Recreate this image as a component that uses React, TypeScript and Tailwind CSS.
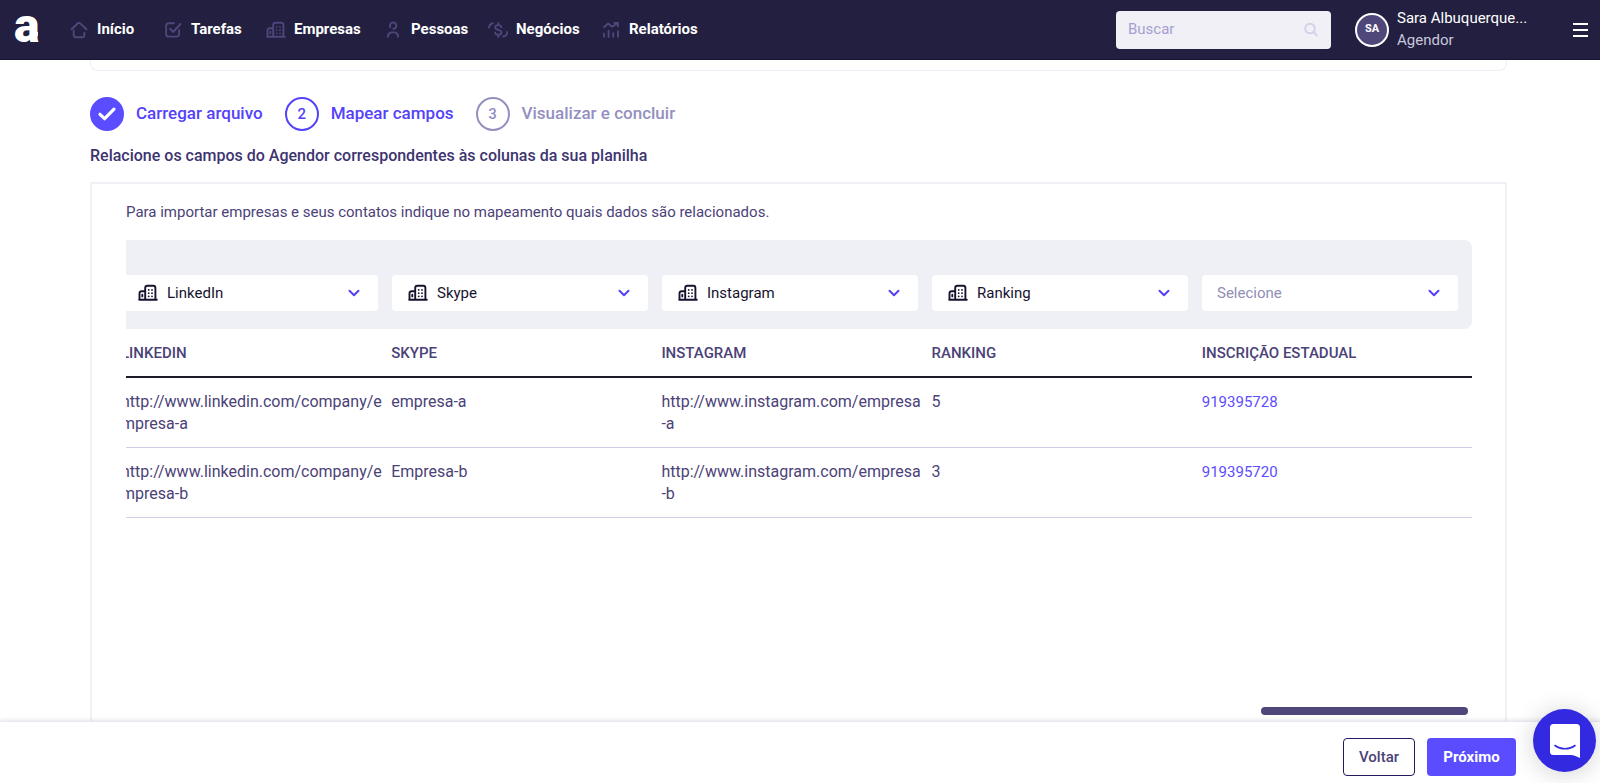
import type { ReactNode } from 'react';

const navItems = [
  { label: 'Início', icon: <HomeIcon />, width: 'w-[94px]' },
  { label: 'Tarefas', icon: <TaskIcon />, width: 'w-[103px]' },
  { label: 'Empresas', icon: <CompanyIcon />, width: 'w-[117px]' },
  { label: 'Pessoas', icon: <PersonIcon />, width: 'w-[105px]' },
  { label: 'Negócios', icon: <DealIcon />, width: 'w-[113px]' },
  { label: 'Relatórios', icon: <ReportIcon />, width: 'w-[113px]' },
];

const columns = [
  { title: 'LinkedIn', mapped: true },
  { title: 'Skype', mapped: true },
  { title: 'Instagram', mapped: true },
  { title: 'Ranking', mapped: true },
  { title: 'Inscrição Estadual', mapped: false },
];

const rows = [
  ['http://www.linkedin.com/company/empresa-a', 'empresa-a', 'http://www.instagram.com/empresa-a', '5', '919395728'],
  ['http://www.linkedin.com/company/empresa-b', 'Empresa-b', 'http://www.instagram.com/empresa-b', '3', '919395720'],
];

function Icon({ children }: { children: ReactNode }) {
  return (
    <svg
      viewBox="0 0 20 20"
      className="h-5 w-5 shrink-0"
      fill="none"
      stroke="currentColor"
      strokeWidth="1.9"
      strokeLinecap="round"
      strokeLinejoin="round"
      aria-hidden="true"
    >
      {children}
    </svg>
  );
}

function HomeIcon() {
  return (
    <Icon>
      <path d="m2.6 9.3 6.2-6a1.700 1.700 0 0 1 2.400 0l6.200 6M4.700 10.500v4.800a1.900 1.900 0 0 0 1.900 1.900h6.800a1.900 1.900 0 0 0 1.900-1.900v-2.500" />
    </Icon>
  );
}

function TaskIcon() {
  return (
    <Icon>
      <path d="M11 3.200H5.800A2.700 2.700 0 0 0 3.100 5.900v8a2.700 2.700 0 0 0 2.700 2.700h7.600a2.700 2.700 0 0 0 2.700-2.700V10M7 8.700l3.100 3.300 7.400-8" />
    </Icon>
  );
}

function CompanyIcon() {
  return (
    <Icon>
      <path d="M1.200 16.800h17.600M7.200 16.600V5A2.200 2.200 0 0 1 9.400 2.800h5.800A2.200 2.200 0 0 1 17.400 5v11.600M7 8.300H3.800A2.300 2.300 0 0 0 1.500 10.600v6M4.300 11.800v1.600" />
      <path strokeWidth="1.800" d="M10.700 6.900h.01M14 6.900h.01M10.700 10.200h.01M14 10.200h.01M10.700 13.300h.01M14 13.300h.01" />
    </Icon>
  );
}

function PersonIcon() {
  return (
    <Icon>
      <path d="M7.300 7.200A3.200 3.200 0 1 1 10.300 8.900M5 16.800v-.5a3.900 3.900 0 0 1 3.900-3.900h2.200a3.900 3.900 0 0 1 3.900 3.900v.5" />
    </Icon>
  );
}

function DealIcon() {
  return (
    <Icon>
      <path d="M13.400 7.200C13 5.800 11.800 5.100 10.300 5.100c-1.700 0-3 .9-3 2.300 0 3.200 6.200 1.800 6.200 5.100 0 1.400-1.300 2.300-3.100 2.300-1.700 0-3-.8-3.300-2.200M10.300 3v2M10.300 15v2M1 7.600a5 5 0 0 1 3.900-4.400M19.300 12a5.200 5.200 0 0 1-4.200 4.600" />
    </Icon>
  );
}

function ReportIcon() {
  return (
    <Icon>
      <path d="M3 7.200 7.200 3.500l3.800 3.200L16.300 3.500M13.300 3H17v3.400M3 13.700v3M7.600 10.800v5.900M12.200 13.200v3.500M17 11.300v5.400" />
    </Icon>
  );
}

function Header() {
  return (
    <header className="flex h-[60px] shrink-0 items-center border-b border-[#17153a] bg-[#221f40] pr-3 pl-3.5">
      <a href="#" aria-label="Agendor" className="relative w-[55px] text-white">
        <span className="block pb-2 font-[Roboto] text-5xl font-black">a</span>
        <span className="absolute bottom-[22px] left-5 h-1 w-1 bg-white" />
      </a>
      <nav className="flex items-center">
        {navItems.map((item) => (
          <a key={item.label} href="#" className={`flex items-center gap-2 text-[15px] font-bold text-white ${item.width}`}>
            <span className="text-[#4f467a]">{item.icon}</span>
            {item.label}
          </a>
        ))}
      </nav>

      <div className="ml-auto flex items-center">
        <label className="flex h-[38px] w-[215px] items-center rounded bg-[#f0f0f6] px-3">
          <input
            type="search"
            aria-label="Buscar"
            placeholder="Buscar"
            className="min-w-0 flex-1 bg-transparent text-[15px] outline-none placeholder:text-[#a5a0d0]"
          />
          <svg viewBox="0 0 16 16" className="h-4 w-4" fill="none" stroke="#d3d1e8" strokeWidth="2" strokeLinecap="round" aria-hidden="true">
            <circle cx="7" cy="6.500" r="4.800" />
            <path d="m10.600 10.200 3.200 3.200" />
          </svg>
        </label>
        <div className="ml-6 flex h-[34px] w-[34px] items-center justify-center rounded-full border-2 border-white bg-[#4f467a] text-[11px] font-bold text-white">
          SA
        </div>
        <div className="ml-2 w-44 pb-0.5 text-[15px] leading-[22px]">
          <p className="text-white">Sara Albuquerque...</p>
          <p className="text-[#c9c7dc]">Agendor</p>
        </div>
        <button type="button" aria-label="Menu" className="flex w-[15px] flex-col gap-1">
          <span className="h-0.5 bg-white" />
          <span className="h-0.5 bg-white" />
          <span className="h-0.5 bg-white" />
        </button>
      </div>
    </header>
  );
}

function Stepper() {
  const circle = 'flex h-[34px] w-[34px] items-center justify-center rounded-full border-2 text-[15px]';

  return (
    <ol className="mt-[26px] flex items-center gap-[22px] text-[17px] font-medium text-[#5442fb]">
      <li className="flex items-center gap-3">
        <span className={`${circle} border-[#5b4dff] bg-[#5b4dff]`}>
          <svg viewBox="0 0 20 20" className="h-5 w-5" fill="none" stroke="white" strokeWidth="3.200" strokeLinecap="round" strokeLinejoin="round" aria-hidden="true">
            <path d="m3 10.300 4.600 4.400L17 5.200" />
          </svg>
        </span>
        Carregar arquivo
      </li>
      <li className="flex items-center gap-3">
        <span className={`${circle} border-[#5442fb]`}>2</span>
        Mapear campos
      </li>
      <li className="flex items-center gap-3 text-[#9390bf]">
        <span className={`${circle} border-[#9390bf]`}>3</span>
        Visualizar e concluir
      </li>
    </ol>
  );
}

function FieldSelect({ title, mapped }: { title: string; mapped: boolean }) {
  return (
    <div className="relative w-64 text-[#16132f]">
      <select
        aria-label={`Campo para ${title}`}
        className={`h-9 w-full appearance-none rounded bg-white pr-10 text-[15px] outline-none ${mapped ? 'pl-[45px]' : 'pl-[15px] text-[#918eb5]'}`}
      >
        <option>{mapped ? title : 'Selecione'}</option>
      </select>
      {mapped && (
        <span className="pointer-events-none absolute inset-y-0 left-4 flex items-center">
          <CompanyIcon />
        </span>
      )}
      <span className="pointer-events-none absolute inset-y-0 right-4 flex items-center">
        <svg viewBox="0 0 16 16" className="h-4 w-4" fill="none" stroke="#5442fb" strokeWidth="2" strokeLinecap="round" strokeLinejoin="round" aria-hidden="true">
          <path d="m3.500 5.800 4.500 4.500 4.500-4.500" />
        </svg>
      </span>
    </div>
  );
}

function MappingTable() {
  return (
    <div className="mt-[17px] flex justify-end overflow-hidden">
      <div className="w-[1351px] shrink-0">
        <div className="flex gap-3.5 rounded-r-lg bg-[#eff0f6] pt-[35px] pb-[18px] pl-px">
          {columns.map((column) => (
            <FieldSelect key={column.title} title={column.title} mapped={column.mapped} />
          ))}
        </div>
        <table className="w-full table-fixed border-collapse text-left leading-[22px] text-[#4b4277]">
          <thead>
            <tr className="h-12 border-b-2 border-[#1c1a2b] text-[15px]">
              {columns.map((column) => (
                <th key={column.title} className="font-medium uppercase">{column.title}</th>
              ))}
            </tr>
          </thead>
          <tbody>
            {rows.map((row) => (
              <tr key={row[0]} className="border-b border-[#cfcee6]">
                {row.map((value, i) => (
                  <td key={value} className={`pt-[13px] pr-2 pb-3 align-top break-all ${i === 4 ? 'text-[15px] text-[#5b4dff]' : ''}`}>
                    {value}
                  </td>
                ))}
              </tr>
            ))}
          </tbody>
        </table>
      </div>
    </div>
  );
}

function Footer() {
  return (
    <footer className="relative flex h-[62px] shrink-0 items-center justify-end gap-3 border-t border-[#e9e9f2] bg-white pt-4 pr-[84px] pb-[7px] shadow-[0_-1px_4px_rgba(34,31,64,0.12)]">
      <button type="button" className="h-[38px] w-[72px] rounded border border-[#221a5c] text-[15px] font-medium text-[#4b4277]">
        Voltar
      </button>
      <button type="button" className="h-[38px] w-[89px] rounded bg-[#5b4dff] text-[15px] font-bold text-white">
        Próximo
      </button>
      {/* Chat launcher */}
      <button
        type="button"
        aria-label="Abrir chat"
        className="absolute right-1 bottom-[11px] flex h-[63px] w-[63px] items-center justify-center rounded-full bg-[#3329e0] shadow-[0_2px_24px_rgba(0,0,0,0.18)]"
      >
        <svg viewBox="0 0 32 36" className="h-9 w-8" aria-hidden="true">
          <path d="M4.500 1h23A3.500 3.500 0 0 1 31 4.500V35c-3-1.500-6-3-9.500-3h-17A3.500 3.500 0 0 1 1 28.500v-24A3.500 3.500 0 0 1 4.500 1Z" fill="white" />
          <path d="M6 22.500c5.500 4.300 14.500 4.300 20 0" fill="none" stroke="#3329e0" strokeWidth="1.600" strokeLinecap="round" />
        </svg>
      </button>
    </footer>
  );
}

export default function App() {
  return (
    <div className="flex h-screen flex-col overflow-hidden bg-white font-[Roboto,sans-serif]">
      <Header />
      <main className="flex min-h-0 flex-1 flex-col pr-[93px] pl-[90px]">
        <div className="h-[11px] shrink-0 rounded-b-lg border border-t-0 border-[#eeeef6]" />
        <Stepper />
        <h1 className="mt-3.5 text-base leading-[22px] font-medium text-[#3d3470]">
          Relacione os campos do Agendor correspondentes às colunas da sua planilha
        </h1>
        <section className="mt-[15px] flex min-h-0 flex-1 flex-col border-2 border-b-0 border-[#f0f0f7] pt-[17px] pr-[33px] pl-[34px]">
          <p className="text-[15px] leading-[22px] text-[#4b4277]">
            Para importar empresas e seus contatos indique no mapeamento quais dados são relacionados.
          </p>
          <MappingTable />
          <div className="mt-auto mr-1 mb-1.5 h-2 w-[207px] shrink-0 self-end rounded-full bg-[#4f467a]" />
        </section>
      </main>
      <Footer />
    </div>
  );
}
